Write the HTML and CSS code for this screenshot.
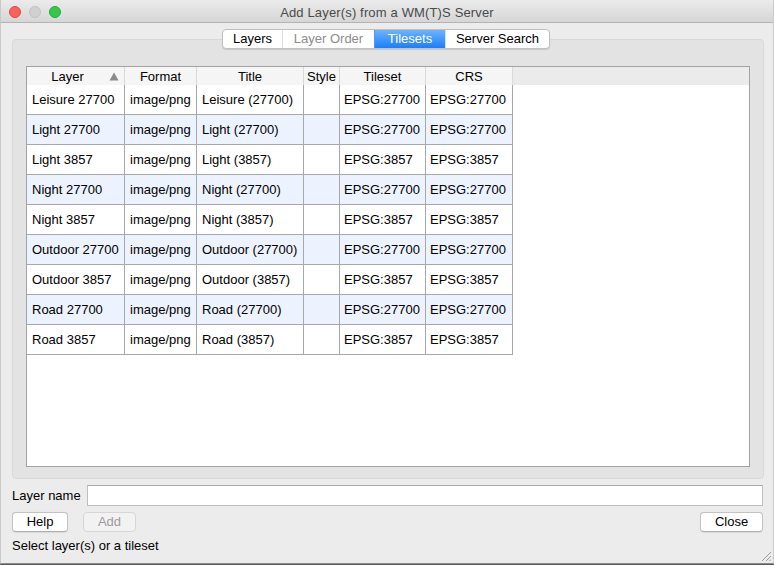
FILE: index.html
```html
<!DOCTYPE html>
<html>
<head>
<meta charset="utf-8">
<title>Add Layer(s) from a WM(T)S Server</title>
<link rel="stylesheet" href="styles.css">
</head>
<body>
<div class="window">
  <div class="titlebar">
    <div class="lights">
      <span class="light red"></span><span class="light gray"></span><span class="light green"></span>
    </div>
    <div class="title">Add Layer(s) from a WM(T)S Server</div>
    <div></div>
  </div>
  <div class="content">
    <div class="tabs">
      <div class="seg">
        <span class="tab t1">Layers</span>
        <span class="tab t2 disabled">Layer Order</span>
        <span class="tab t3 active">Tilesets</span>
        <span class="tab t4">Server Search</span>
      </div>
    </div>
    <div class="pane">
      <div class="table">
        <div class="thead">
          <div class="th th-sort"><span class="th-label">Layer</span><span class="sort"><svg width="10" height="9" viewBox="0 0 10 9"><polygon points="5,0.5 9.5,8.5 0.5,8.5" fill="#8a8a8a"/></svg></span></div>
          <div class="th">Format</div>
          <div class="th">Title</div>
          <div class="th">Style</div>
          <div class="th">Tileset</div>
          <div class="th">CRS</div>
        </div>
        <div class="tbody">
          <div class="tr"><div class="td">Leisure 27700</div><div class="td">image/png</div><div class="td">Leisure (27700)</div><div class="td"></div><div class="td">EPSG:27700</div><div class="td">EPSG:27700</div></div>
          <div class="tr"><div class="td">Light 27700</div><div class="td">image/png</div><div class="td">Light (27700)</div><div class="td"></div><div class="td">EPSG:27700</div><div class="td">EPSG:27700</div></div>
          <div class="tr"><div class="td">Light 3857</div><div class="td">image/png</div><div class="td">Light (3857)</div><div class="td"></div><div class="td">EPSG:3857</div><div class="td">EPSG:3857</div></div>
          <div class="tr"><div class="td">Night 27700</div><div class="td">image/png</div><div class="td">Night (27700)</div><div class="td"></div><div class="td">EPSG:27700</div><div class="td">EPSG:27700</div></div>
          <div class="tr"><div class="td">Night 3857</div><div class="td">image/png</div><div class="td">Night (3857)</div><div class="td"></div><div class="td">EPSG:3857</div><div class="td">EPSG:3857</div></div>
          <div class="tr"><div class="td">Outdoor 27700</div><div class="td">image/png</div><div class="td">Outdoor (27700)</div><div class="td"></div><div class="td">EPSG:27700</div><div class="td">EPSG:27700</div></div>
          <div class="tr"><div class="td">Outdoor 3857</div><div class="td">image/png</div><div class="td">Outdoor (3857)</div><div class="td"></div><div class="td">EPSG:3857</div><div class="td">EPSG:3857</div></div>
          <div class="tr"><div class="td">Road 27700</div><div class="td">image/png</div><div class="td">Road (27700)</div><div class="td"></div><div class="td">EPSG:27700</div><div class="td">EPSG:27700</div></div>
          <div class="tr"><div class="td">Road 3857</div><div class="td">image/png</div><div class="td">Road (3857)</div><div class="td"></div><div class="td">EPSG:3857</div><div class="td">EPSG:3857</div></div>
        </div>
      </div>
    </div>
    <div class="name-row">
      <span class="label">Layer name</span>
      <div class="input"></div>
    </div>
    <div class="btn-row">
      <button class="btn help">Help</button>
      <button class="btn add" disabled>Add</button>
      <span class="spacer"></span>
      <button class="btn close">Close</button>
    </div>
    <div class="status">Select layer(s) or a tileset</div>
  </div>
  <div class="grip"><svg width="10" height="10" viewBox="0 0 10 10"><path d="M1 10 L10 1 M5 10 L10 5 M8.5 10 L10 8.5" stroke="#9a9a9a" stroke-width="1" fill="none"/></svg></div>
</div>
</body>
</html>
```
FILE: styles.css
```css
* { box-sizing: border-box; }
html, body { margin: 0; padding: 0; }
body {
  background: #5a5a5a;
  font-family: "Liberation Sans", Arial, sans-serif;
  font-size: 13px;
  color: #000;
  width: 774px;
  height: 565px;
  overflow: hidden;
}
.window {
  position: relative;
  width: 774px;
  height: 564px;
  background: #ececec;
  border-left: 1px solid #c9c9c9;
  border-right: 1px solid #c9c9c9;
  border-bottom: 1px solid #8c8c8c;
  display: flex;
  flex-direction: column;
}
.titlebar {
  height: 23px;
  flex: none;
  display: grid;
  grid-template-columns: 1fr auto 1fr;
  align-items: center;
  background: linear-gradient(#ebebeb, #d6d6d6);
  border-bottom: 1px solid #b3b3b3;
}
.lights { display: flex; gap: 8px; padding-left: 8px; padding-top: 2px; }
.light { width: 12px; height: 12px; border-radius: 50%; display: block; }
.red { background: #fc605c; border: 1px solid #e3453f; }
.gray { background: #d0d0d0; border: 1px solid #c2c2c2; }
.green { background: #34c84a; border: 1px solid #25a934; }
.title { color: #4a4a4a; font-size: 13px; letter-spacing: 0.15px; padding-top: 2px; }

.content {
  flex: 1;
  display: flex;
  flex-direction: column;
  padding: 0 10px 0 11px;
}
.tabs {
  margin-top: 6px;
  display: flex;
  justify-content: center;
  padding-right: 3px;
  position: relative;
  z-index: 2;
}
.seg {
  display: flex;
  height: 20px;
  background: #fff;
  border: 1px solid #c0c0c0;
  border-radius: 4px;
  box-shadow: 0 1px 1px rgba(0,0,0,0.12);
  overflow: hidden;
}
.tab {
  display: flex;
  align-items: center;
  justify-content: center;
  height: 18px;
  padding-bottom: 1px;
  border-left: 1px solid #dedede;
}
.t1 { width: 59px; border-left: none; }
.t2 { width: 92px; }
.t3 { width: 71px; }
.t4 { width: 104px; }
.tab.disabled { color: #8c8c8c; }
.tab.active {
  background: linear-gradient(#6db3fb, #1b7ffa);
  color: #fff;
  border-left-color: #4a9af9;
}
.pane {
  margin-top: -10px;
  margin-right: -1px;
  height: 440px;
  flex: none;
  background: #e3e3e3;
  border: 1px solid #d8d8d8;
  border-radius: 4px;
  padding: 26px 13px 11px 13px;
  display: flex;
  flex-direction: column;
}
.table {
  flex: 1;
  background: #fff;
  border: 1px solid #a3a3a3;
  display: flex;
  flex-direction: column;
}
.thead {
  display: grid;
  grid-template-columns: 98px 72px 107px 36px 86px 87px;
  height: 18px;
  background: #ebebeb;
}
.th {
  background: #f5f5f5;
  border-right: 1px solid #d9d9d9;
  display: flex;
  align-items: center;
  justify-content: center;
  height: 18px;
}
.th-sort { justify-content: flex-start; }
.th-sort .th-label { flex: 1; text-align: center; padding-left: 2px; }
.sort { width: 18px; display: flex; align-items: center; padding-left: 3px; }
.tr {
  display: grid;
  grid-template-columns: 98px 72px 107px 36px 86px 87px;
  height: 30px;
}
.td {
  border-right: 1px solid #a8a8a8;
  border-bottom: 1px solid #a8a8a8;
  display: flex;
  align-items: center;
  padding-left: 5px;
  white-space: nowrap;
  background: #fff;
}
.td:nth-child(5), .td:nth-child(6) { padding-left: 4px; }
.tr:nth-child(even) .td { background: #edf3fe; }

.name-row {
  margin-top: 6px;
  display: flex;
  align-items: center;
  height: 21px;
}
.label { width: 75px; flex: none; }
.input {
  flex: 1;
  height: 21px;
  background: #fff;
  border: 1px solid #bebebe;
  border-top-color: #a9a9a9;
}
.btn-row {
  margin-top: 6px;
  display: flex;
  align-items: center;
  height: 20px;
}
.btn {
  font-family: "Liberation Sans", Arial, sans-serif;
  font-size: 13px;
  height: 20px;
  padding: 0 0 1px 0;
  background: #fff;
  border: 1px solid #c3c3c3;
  border-bottom-color: #b0b0b0;
  border-radius: 4px;
  color: #000;
  box-shadow: 0 0.5px 1px rgba(0,0,0,0.08);
}
.help { width: 56px; }
.add { width: 53px; margin-left: 15px; background: #f2f2f2; color: #9b9b9b; border-color: #d6d6d6; box-shadow: none; }
.close { width: 63px; }
.spacer { flex: 1; }
.status { margin-top: 6px; line-height: 16px; }
.grip {
  position: absolute;
  right: 2px;
  bottom: 2px;
  width: 10px;
  height: 10px;
  display: flex;
}
```
